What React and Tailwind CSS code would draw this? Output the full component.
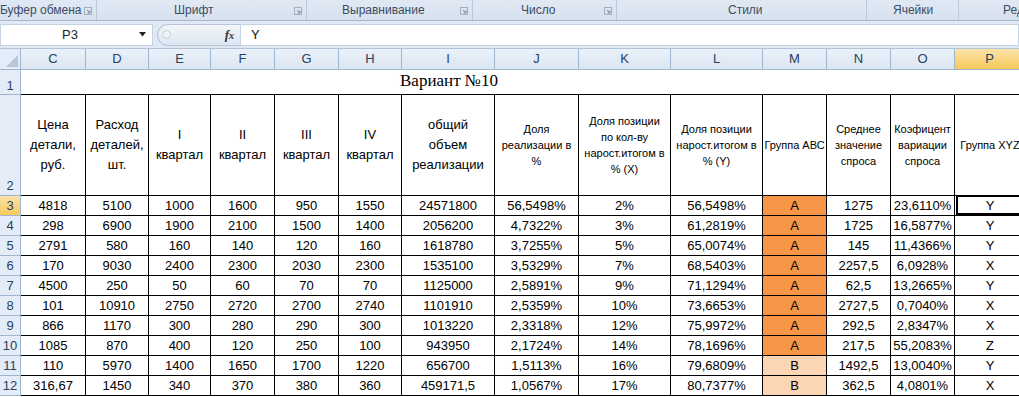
import React from "react";

const cols = [
  { id: "C", w: "w-[65px]" },
  { id: "D", w: "w-[63px]" },
  { id: "E", w: "w-[62px]" },
  { id: "F", w: "w-[64px]" },
  { id: "G", w: "w-[64px]" },
  { id: "H", w: "w-[63px]" },
  { id: "I", w: "w-[93px]" },
  { id: "J", w: "w-[84px]" },
  { id: "K", w: "w-[92px]" },
  { id: "L", w: "w-[92px]" },
  { id: "M", w: "w-[64px]" },
  { id: "N", w: "w-[64px]" },
  { id: "O", w: "w-[64px]" },
  { id: "P", w: "w-[70px]" },
];

const headers = [
  { lines: ["Цена", "детали,", "руб."], big: true },
  { lines: ["Расход", "деталей,", "шт."], big: true },
  { lines: ["I", "квартал"], big: true },
  { lines: ["II", "квартал"], big: true },
  { lines: ["III", "квартал"], big: true },
  { lines: ["IV", "квартал"], big: true },
  { lines: ["общий", "объем", "реализации"], big: true },
  { lines: ["Доля", "реализации в", "%"] },
  { lines: ["Доля позиции", "по кол-ву", "нарост.итогом в", "% (X)"] },
  { lines: ["Доля позиции", "нарост.итогом в", "% (Y)"] },
  { lines: ["Группа АВС"] },
  { lines: ["Среднее", "значение", "спроса"] },
  { lines: ["Коэфицент", "вариации", "спроса"] },
  { lines: ["Группа XYZ"] },
];

const rows = [
  [3, "4818", "5100", "1000", "1600", "950", "1550", "24571800", "56,5498%", "2%", "56,5498%", "A", "1275", "23,6110%", "Y"],
  [4, "298", "6900", "1900", "2100", "1500", "1400", "2056200", "4,7322%", "3%", "61,2819%", "A", "1725", "16,5877%", "Y"],
  [5, "2791", "580", "160", "140", "120", "160", "1618780", "3,7255%", "5%", "65,0074%", "A", "145", "11,4366%", "Y"],
  [6, "170", "9030", "2400", "2300", "2030", "2300", "1535100", "3,5329%", "7%", "68,5403%", "A", "2257,5", "6,0928%", "X"],
  [7, "4500", "250", "50", "60", "70", "70", "1125000", "2,5891%", "9%", "71,1294%", "A", "62,5", "13,2665%", "Y"],
  [8, "101", "10910", "2750", "2720", "2700", "2740", "1101910", "2,5359%", "10%", "73,6653%", "A", "2727,5", "0,7040%", "X"],
  [9, "866", "1170", "300", "280", "290", "300", "1013220", "2,3318%", "12%", "75,9972%", "A", "292,5", "2,8347%", "X"],
  [10, "1085", "870", "400", "120", "250", "100", "943950", "2,1724%", "14%", "78,1696%", "A", "217,5", "55,2083%", "Z"],
  [11, "110", "5970", "1400", "1650", "1700", "1220", "656700", "1,5113%", "16%", "79,6809%", "B", "1492,5", "13,0040%", "Y"],
  [12, "316,67", "1450", "340", "370", "380", "360", "459171,5", "1,0567%", "17%", "80,7377%", "B", "362,5", "4,0801%", "X"],
];

const Launcher = () => (
  <svg width="8" height="8" viewBox="0 0 8 8" className="shrink-0">
    <rect x="0.5" y="0.5" width="7" height="7" fill="none" stroke="#a3b0c2" />
    <path d="M3 3 L6 6 M6 3.5 V6 H3.5" fill="none" stroke="#7a889c" />
  </svg>
);

function RibbonGroup({ label, className, launcher }) {
  return (
    <div className={`flex h-full shrink-0 items-end border-r border-[#b9c9dd] pb-[2px] ${className}`}>
      <span className="flex-1 whitespace-nowrap leading-[15px]">{label}</span>
      {launcher && <div className="mb-[3px] mr-[4px]"><Launcher /></div>}
    </div>
  );
}

export default function App() {
  return (
    <div className="h-[397px] w-[1019px] overflow-hidden bg-white font-['Liberation_Sans',Arial,sans-serif]">
      {/* ribbon group captions */}
      <div className="flex h-[21px] overflow-hidden border-b border-[#a7b8ce] bg-gradient-to-b from-[#e0e8f3] to-[#d7e2ef] text-[12px] text-[#3c4c63]">
        <RibbonGroup label="Буфер обмена" className="w-[97px]" launcher />
        <RibbonGroup label="Шрифт" className="w-[210px] pl-[77px]" launcher />
        <RibbonGroup label="Выравнивание" className="w-[166px] pl-[35px]" launcher />
        <RibbonGroup label="Число" className="w-[144px] pl-[48px]" launcher />
        <RibbonGroup label="Стили" className="w-[250px] pl-[111px]" />
        <RibbonGroup label="Ячейки" className="w-[92px] pl-[26px]" />
        <div className="flex h-full shrink-0 items-end whitespace-nowrap pb-[2px] pl-[44px] leading-[15px]">Редактирование</div>
      </div>

      {/* formula bar */}
      <div className="flex h-[28px] items-center border-b border-[#b4c4d8] bg-[#dfe8f3]">
        <div className="flex h-[22px] w-[153px] shrink-0 items-center border border-[#c5d2e2] bg-white text-[13px] text-[#222]">
          <span className="flex-1 text-center">P3</span>
          <svg width="8" height="5" viewBox="0 0 8 5" className="mr-[5px]">
            <path d="M0 0 H7 L3.5 4.5 Z" fill="#222" />
          </svg>
        </div>
        <div className="ml-[4px] flex h-[22px] flex-1 items-stretch">
          <div className="flex w-[83px] items-center rounded-l-[11px] border border-r-0 border-[#b7c6d9] bg-gradient-to-b from-[#f3f6fa] to-[#dde6f1]">
            <span className="ml-[4px] h-[9px] w-[9px] rounded-full border border-[#c3cfdd] bg-[#eef2f7]" />
            <span className="ml-auto mr-[6px] font-['Liberation_Serif',serif] text-[13px] font-bold italic text-[#333]">
              f<span className="text-[10px]">x</span>
            </span>
          </div>
          <div className="flex flex-1 items-center border border-[#c5d2e2] bg-white pl-[10px] text-[13px] text-[#111]">Y</div>
        </div>
      </div>

      {/* column headers */}
      <div className="flex h-[21px] border-b border-[#9eb6ce] text-[13px] text-[#29415f]">
        <div className="relative w-[21px] shrink-0 border-r border-[#9eb6ce] bg-[#e4ecf7]">
          <svg width="12" height="12" viewBox="0 0 12 12" className="absolute bottom-[2px] right-[2px]">
            <path d="M12 0 V12 H0 Z" fill="#b7c5d6" />
          </svg>
        </div>
        {cols.map((c) => (
          <div
            key={c.id}
            className={`${c.w} flex shrink-0 items-center justify-center border-r border-[#9eb6ce] ${
              c.id === "P" ? "bg-gradient-to-b from-[#fbe3a8] to-[#f6c957]" : "bg-gradient-to-b from-[#e9f0f9] to-[#dce6f2]"
            }`}
          >
            {c.id}
          </div>
        ))}
      </div>

      {/* row 1 – title */}
      <div className="flex h-[25px]">
        <div className="flex w-[21px] shrink-0 items-end justify-center border-r border-b border-[#9eb6ce] bg-[#e4ecf7] text-[13px] leading-[17px] text-[#29415f]">1</div>
        <div className="flex flex-1 items-end border-b border-black pb-[3px] pl-[379px] font-['Liberation_Serif','Times_New_Roman',serif] text-[17px] leading-[20px] text-black">
          Вариант №10
        </div>
      </div>

      {/* row 2 – table headings */}
      <div className="flex h-[101px]">
        <div className="flex w-[21px] shrink-0 items-end justify-center border-r border-b border-[#9eb6ce] bg-[#e4ecf7] text-[13px] leading-[18px] text-[#29415f]">2</div>
        {cols.map((c, i) => (
          <div
            key={c.id}
            className={`${c.w} flex shrink-0 flex-col items-center justify-center border-b border-black text-center text-black ${
              c.id === "P" ? "" : "border-r"
            } ${headers[i].big ? "text-[13px] leading-[20px]" : "text-[11px] leading-[16px]"}`}
          >
            {headers[i].lines.map((l) => (
              <span key={l} className="whitespace-nowrap">{l}</span>
            ))}
          </div>
        ))}
      </div>

      {/* data rows */}
      {rows.map((r) => (
        <div key={r[0]} className="flex h-[20px]">
          <div
            className={`flex w-[21px] shrink-0 items-center justify-center border-r border-b border-[#9eb6ce] text-[13px] text-[#29415f] ${
              r[0] === 3 ? "bg-gradient-to-b from-[#fbe3a8] to-[#f6c957]" : "bg-[#e4ecf7]"
            }`}
          >
            {r[0]}
          </div>
          {cols.map((c, i) => {
            const v = r[i + 1];
            let bg = "";
            if (c.id === "M") bg = v === "A" ? "bg-[#f79646]" : "bg-[#fcd5b4]";
            const selected = c.id === "P" && r[0] === 3;
            return (
              <div
                key={c.id}
                className={`${c.w} relative flex shrink-0 items-center justify-center border-b border-black text-[13px] leading-[19px] text-black ${
                  c.id === "P" ? "" : "border-r"
                } ${bg}`}
              >
                {v}
                {selected && <div className="absolute left-[1px] top-[-1px] right-[4px] bottom-0 border-2 border-black" />}
              </div>
            );
          })}
        </div>
      ))}
    </div>
  );
}
